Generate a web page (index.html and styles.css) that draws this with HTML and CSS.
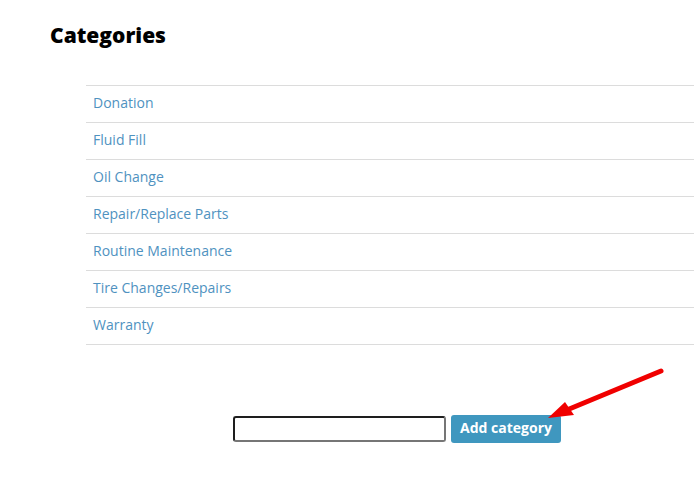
FILE: index.html
```html
<!DOCTYPE html>
<html>
<head>
<meta charset="utf-8">
<link rel="stylesheet" href="styles.css">
</head>
<body>
<div class="page">
  <h1 class="title">Categories</h1>
  <div class="panel">
    <ul class="cat-list">
      <li><a href="#">Donation</a></li>
      <li><a href="#">Fluid Fill</a></li>
      <li><a href="#">Oil Change</a></li>
      <li><a href="#">Repair/Replace Parts</a></li>
      <li><a href="#">Routine Maintenance</a></li>
      <li><a href="#">Tire Changes/Repairs</a></li>
      <li><a href="#">Warranty</a></li>
    </ul>
    <form class="add-form">
      <input class="add-input" type="text">
      <button class="add-btn" type="button">Add category</button>
    </form>
  </div>
  <svg class="arrow" width="694" height="495" viewBox="0 0 694 495">
    <line x1="661" y1="371" x2="562" y2="412" stroke="#f00000" stroke-width="5" stroke-linecap="round"/>
    <polygon points="548,418 565,402 574,415" fill="#f00000"/>
  </svg>
</div>
</body>
</html>
```

FILE: styles.css
```css
html, body {
  margin: 0;
  padding: 0;
  background: #ffffff;
  overflow: hidden;
}
body {
  font-family: "Open Sans", "Noto Sans", sans-serif;
  width: 694px;
  height: 495px;
}
.page {
  position: relative;
  width: 694px;
  height: 495px;
  padding-top: 23px;
  box-sizing: border-box;
}
.title {
  margin: 0 0 0 50px;
  font-size: 21px;
  line-height: 24px;
  font-weight: 800;
  color: #000;
}
.panel {
  margin: 38px 0 0 86px;
  width: 622px;
}
.cat-list {
  list-style: none;
  margin: 0;
  padding: 0;
  border-bottom: 1px solid #dcdcdc;
}
.cat-list li {
  border-top: 1px solid #dcdcdc;
  padding: 7px 7px 9px;
  height: 20px;
  line-height: 20px;
  font-size: 14px;
}
.cat-list a {
  color: #4f92bf;
  text-decoration: none;
}
.add-form {
  margin: 70px 0 0 0;
  display: flex;
  justify-content: center;
  align-items: center;
  gap: 5px;
}
.add-input {
  width: 213px;
  height: 26px;
  box-sizing: border-box;
  border: 2px solid #1e1e1e;
  border-right-color: #767676;
  border-bottom-color: #767676;
  border-radius: 3px;
  margin: 0;
  padding: 0 4px;
}
.add-btn {
  width: 110px;
  height: 28px;
  border: none;
  border-radius: 3px;
  background: #3f97bf;
  color: #fff;
  font-family: "Open Sans", "Noto Sans", sans-serif;
  font-weight: 700;
  font-size: 14px;
  margin: 0;
  padding: 0 0 3px;
}
.arrow {
  position: absolute;
  left: 0;
  top: 0;
  pointer-events: none;
}
```
